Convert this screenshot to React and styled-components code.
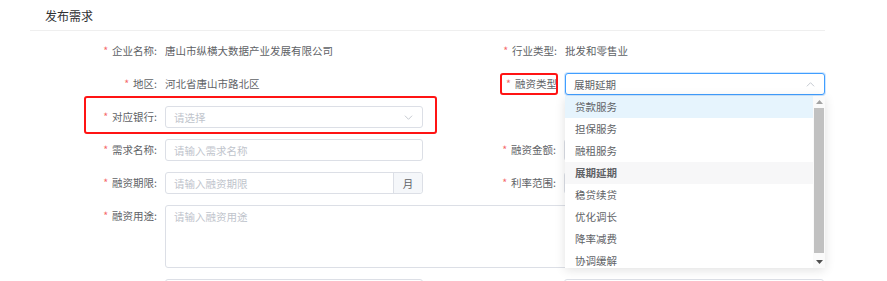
import React from "react";
import styled, { createGlobalStyle, css } from "styled-components";

const GlobalStyle = createGlobalStyle`
  html, body {
    margin: 0;
    padding: 0;
    background: #fff;
    overflow: hidden;
  }
  body {
    font-family: "Noto Sans CJK SC", "Noto Sans", sans-serif;
    color: #606266;
  }
`;

const Page = styled.div`
  width: 795px;
  margin-left: 30px;
`;

const Header = styled.div`
  height: 30px;
  display: flex;
  align-items: center;
  padding-left: 15px;
  border-bottom: 1px solid #efefef;
  font-size: 12px;
  color: #303133;
`;

const Form = styled.div`
  padding: 9px 0 0 55px;
  display: flex;
  flex-direction: column;
  gap: 11px;
`;

const Row = styled.div`
  display: flex;
  gap: 61px;
`;

const marker = css`
  &::after {
    content: "";
    position: absolute;
    border: 2px solid #ff1414;
    border-radius: 3px;
    pointer-events: none;
  }
`;

const FormItem = styled.div`
  position: relative;
  display: flex;
  align-items: ${(p) => (p.$top ? "flex-start" : "center")};
  min-height: 22px;
  ${(p) =>
    p.$marked &&
    css`
      ${marker}
      &::after {
        top: -10px;
        left: -1px;
        right: -14px;
        bottom: -6px;
      }
    `}
`;

const Label = styled.div`
  position: relative;
  width: 80px;
  flex: none;
  box-sizing: border-box;
  padding-right: 8px;
  text-align: right;
  font-size: 10.5px;
  line-height: 22px;
  color: #606266;
  white-space: nowrap;

  &::before {
    content: "*";
    color: #f56c6c;
    margin-right: 4px;
  }

  ${(p) =>
    p.$marked &&
    css`
      ${marker}
      &::after {
        top: 0;
        left: 15px;
        right: 7px;
        bottom: 0;
      }
    `}
`;

const Value = styled.div`
  font-size: 10.5px;
  color: #606266;
  line-height: 22px;
`;

const Field = styled.div`
  position: relative;
  width: ${(p) => p.$w}px;
  height: ${(p) => p.$h || 22}px;
  box-sizing: border-box;
  border: 1px solid ${(p) => (p.$focus ? "#409eff" : "#dcdfe6")};
  border-radius: 3px;
  background: #fff;
  display: flex;
  align-items: ${(p) => (p.$top ? "flex-start" : "center")};
  font-size: 10.5px;
  ${(p) => p.$focus && "box-shadow: 0 0 0 1px rgba(64,158,255,0.25);"}
`;

const Text = styled.span`
  flex: 1;
  padding: ${(p) => (p.$top ? "3px 8px" : "0 8px")};
  color: ${(p) => (p.$placeholder ? "#c0c4cc" : "#606266")};
  white-space: nowrap;
`;

const Arrow = styled.svg`
  width: 9px;
  height: 9px;
  margin-right: 9px;
  flex: none;
`;

const Append = styled.div`
  width: 28px;
  align-self: stretch;
  display: flex;
  align-items: center;
  justify-content: center;
  background: #f5f7fa;
  border-left: 1px solid #dcdfe6;
  border-radius: 0 3px 3px 0;
  color: #606266;
`;

const Dropdown = styled.div`
  position: absolute;
  top: calc(100% + 2px);
  left: -1px;
  width: 260px;
  height: 172px;
  background: #fff;
  box-shadow: 0 2px 10px rgba(0, 0, 0, 0.12);
  display: flex;
  z-index: 10;
`;

const List = styled.div`
  flex: 1;
  overflow: hidden;
`;

const Option = styled.div`
  height: 22px;
  line-height: 22px;
  padding: 0 10px;
  font-size: 10.5px;
  color: #606266;
  background: ${(p) => (p.$hover ? "#e6f4fd" : p.$selected ? "#f7f7f8" : "#fff")};
  font-weight: ${(p) => (p.$selected ? 700 : 400)};
  white-space: nowrap;
`;

const Scrollbar = styled.div`
  width: 12px;
  display: flex;
  flex-direction: column;
  align-items: center;
  background: #fafafa;
`;

const ScrollBtn = styled.div`
  height: 12px;
  display: flex;
  align-items: center;
  justify-content: center;
`;

const Thumb = styled.div`
  width: 10px;
  height: 145px;
  background: #c1c1c1;
`;

const Chevron = ({ up }) => (
  <Arrow viewBox="0 0 10 10">
    <path
      d={up ? "M1 7 L5 3 L9 7" : "M1 3 L5 7 L9 3"}
      fill="none"
      stroke="#c0c4cc"
      strokeWidth="1"
    />
  </Arrow>
);

const Tri = ({ down, color }) => (
  <svg width="7" height="4" viewBox="0 0 7 4">
    <path d={down ? "M0 0 H7 L3.5 4 Z" : "M0 4 H7 L3.5 0 Z"} fill={color} />
  </svg>
);

const options = ["贷款服务", "担保服务", "融租服务", "展期延期", "稳贷续贷", "优化调长", "降率减费", "协调缓解", "其他"];

export default function App() {
  return (
    <>
      <GlobalStyle />
      <Page>
        <Header>发布需求</Header>
        <Form>
          <Row>
            <FormItem style={{ width: 339 }}>
              <Label>企业名称:</Label>
              <Value>唐山市纵横大数据产业发展有限公司</Value>
            </FormItem>
            <FormItem>
              <Label>行业类型:</Label>
              <Value>批发和零售业</Value>
            </FormItem>
          </Row>
          <Row>
            <FormItem style={{ width: 339 }}>
              <Label>地区:</Label>
              <Value>河北省唐山市路北区</Value>
            </FormItem>
            <FormItem>
              <Label $marked>融资类型</Label>
              <Field $w={260} $focus>
                <Text>展期延期</Text>
                <Chevron up />
                <Dropdown>
                  <List>
                    {options.map((o, i) => (
                      <Option key={o} $hover={i === 0} $selected={o === "展期延期"}>
                        {o}
                      </Option>
                    ))}
                  </List>
                  <Scrollbar>
                    <ScrollBtn>
                      <Tri color="#a3a3a3" />
                    </ScrollBtn>
                    <Thumb />
                    <ScrollBtn style={{ marginTop: "auto" }}>
                      <Tri down color="#505050" />
                    </ScrollBtn>
                  </Scrollbar>
                </Dropdown>
              </Field>
            </FormItem>
          </Row>
          <Row>
            <FormItem $marked>
              <Label>对应银行:</Label>
              <Field $w={258}>
                <Text $placeholder>请选择</Text>
                <Chevron />
              </Field>
            </FormItem>
          </Row>
          <Row>
            <FormItem>
              <Label>需求名称:</Label>
              <Field $w={258}>
                <Text $placeholder>请输入需求名称</Text>
              </Field>
            </FormItem>
            <FormItem>
              <Label>融资金额:</Label>
              <Field $w={260}>
                <Text $placeholder>请输入融资金额</Text>
              </Field>
            </FormItem>
          </Row>
          <Row>
            <FormItem>
              <Label>融资期限:</Label>
              <Field $w={258}>
                <Text $placeholder>请输入融资期限</Text>
                <Append>月</Append>
              </Field>
            </FormItem>
            <FormItem>
              <Label>利率范围:</Label>
              <Field $w={260}>
                <Text $placeholder>请输入利率范围</Text>
              </Field>
            </FormItem>
          </Row>
          <Row>
            <FormItem $top>
              <Label>融资用途:</Label>
              <Field $w={660} $h={63} $top>
                <Text $placeholder $top>请输入融资用途</Text>
              </Field>
            </FormItem>
          </Row>
          <Row>
            <FormItem>
              <Label>联系人:</Label>
              <Field $w={258}>
                <Text $placeholder>请输入联系人</Text>
              </Field>
            </FormItem>
            <FormItem>
              <Label>联系电话:</Label>
              <Field $w={260}>
                <Text $placeholder>请输入联系电话</Text>
              </Field>
            </FormItem>
          </Row>
        </Form>
      </Page>
    </>
  );
}
